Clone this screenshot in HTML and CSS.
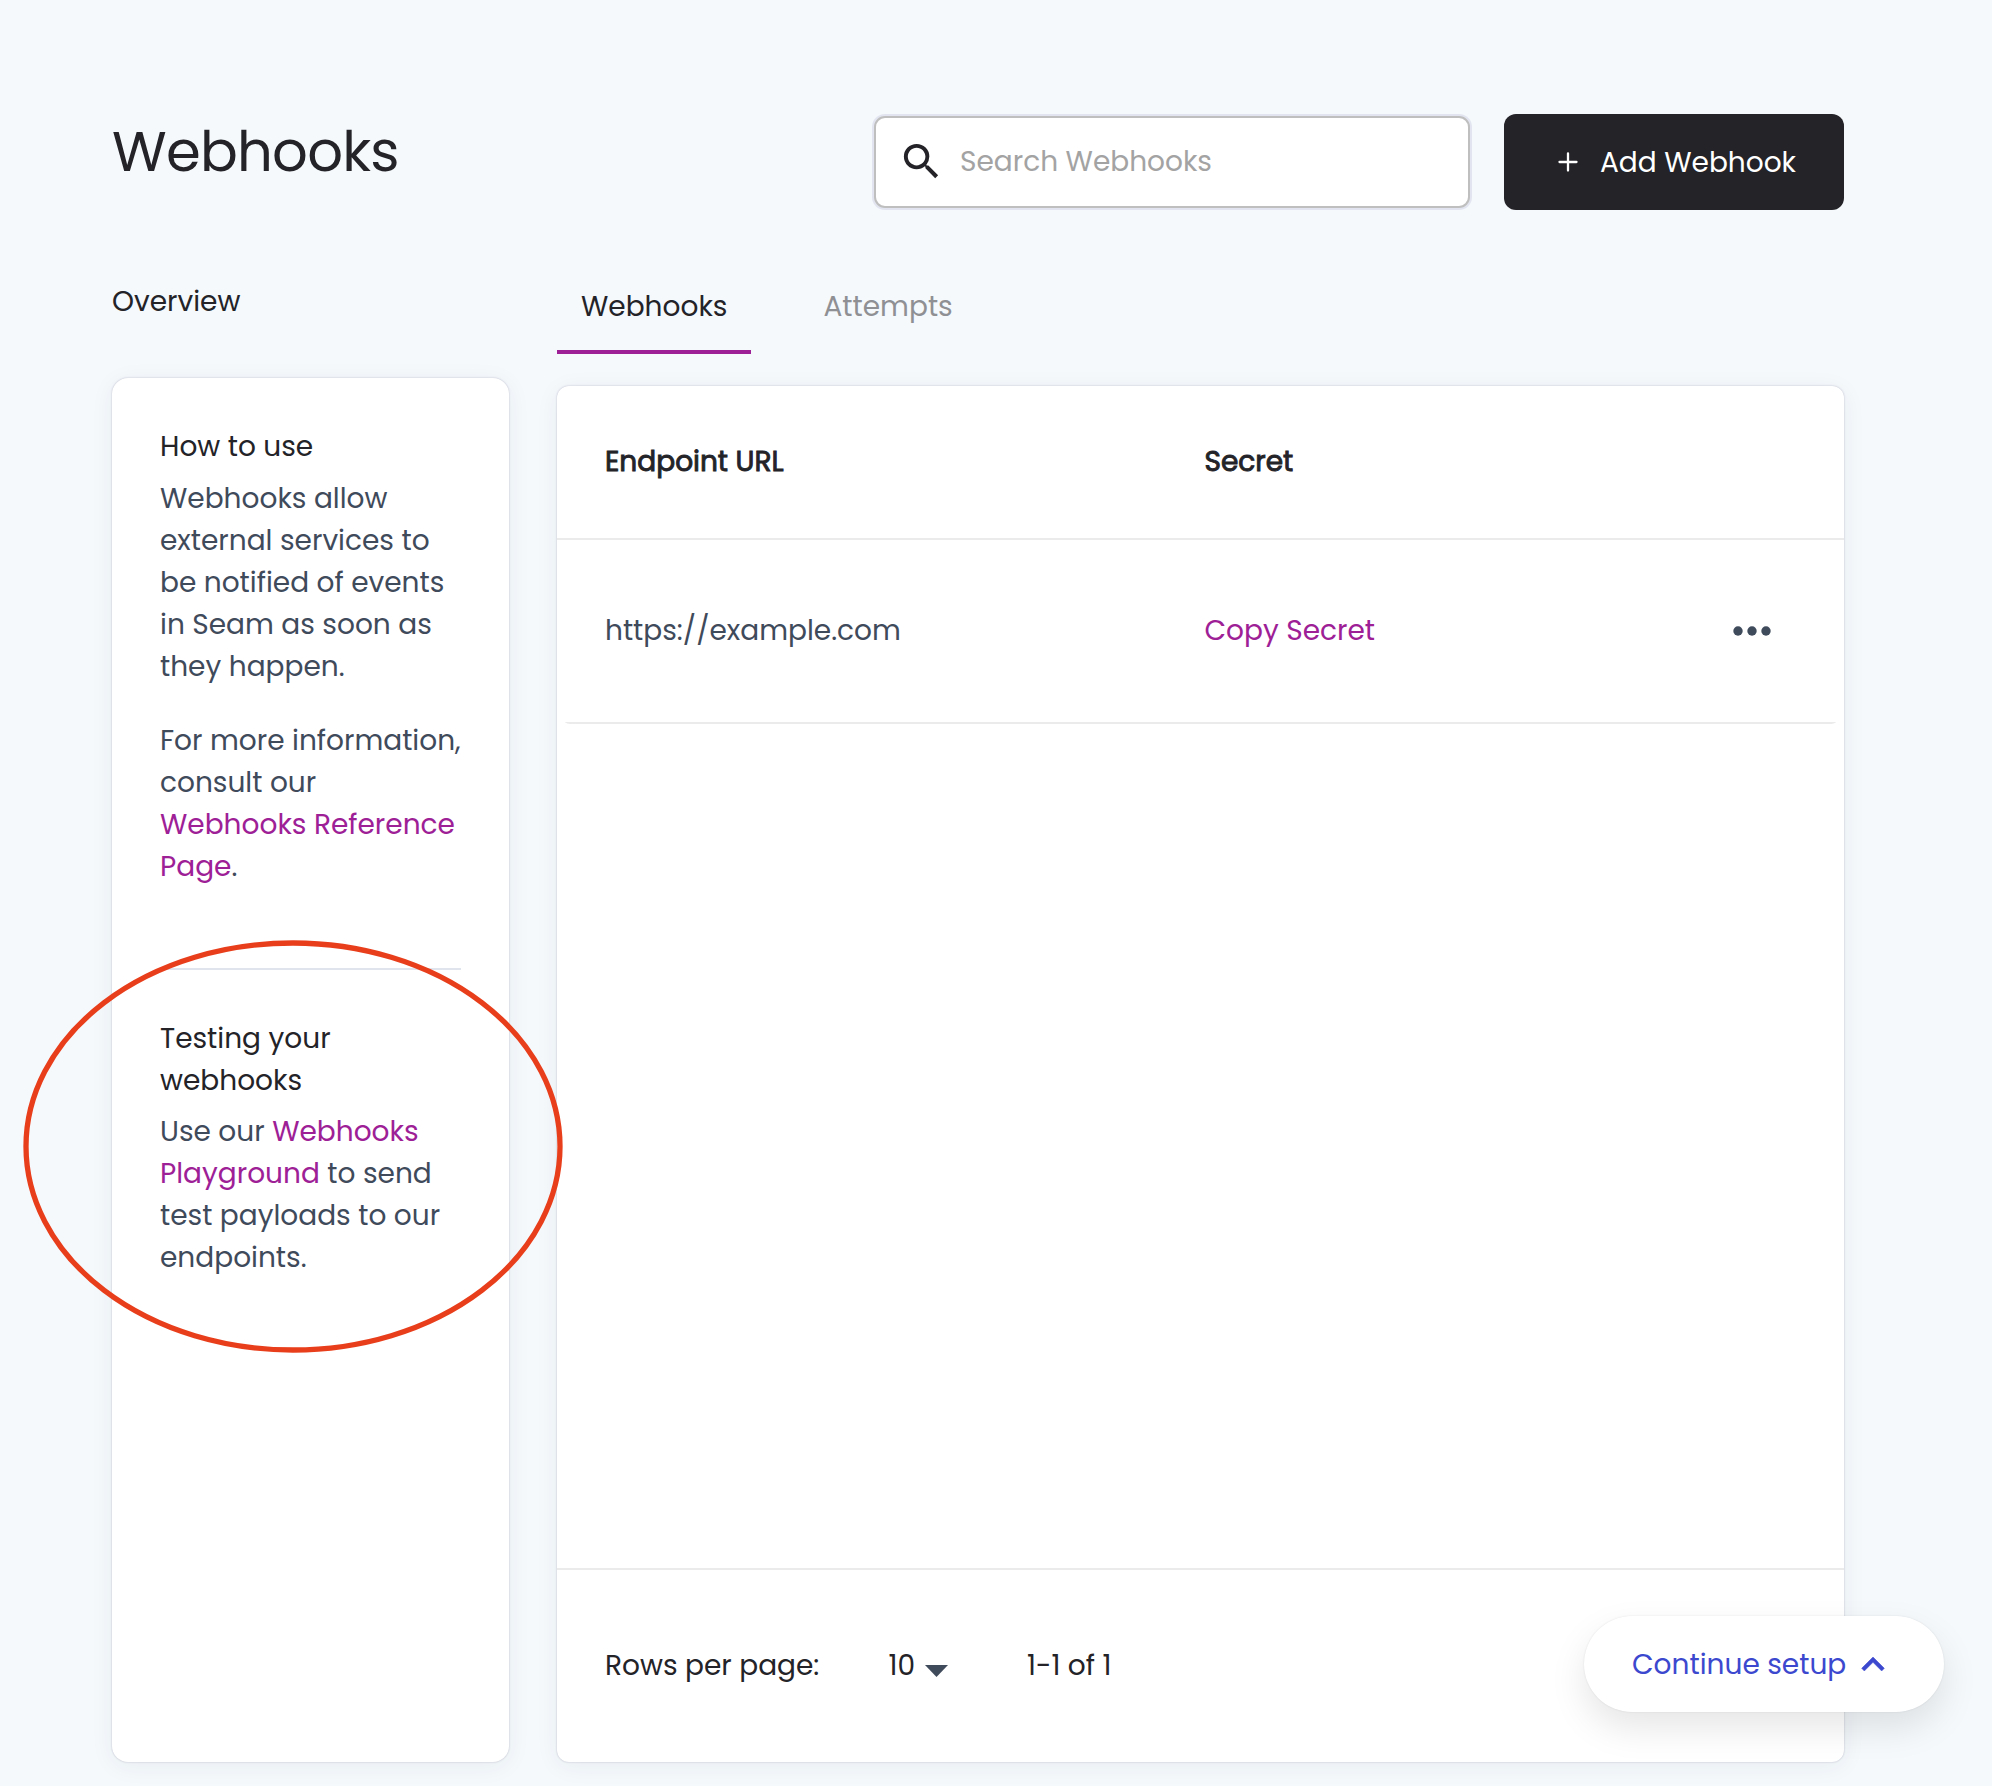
FILE: index.html
```
<!DOCTYPE html>
<html lang="en">
<head>
<meta charset="utf-8">
<title>Webhooks</title>
<link rel="stylesheet" href="styles.css">
</head>
<body>
<main class="page">
  <header class="page-header">
    <h1 class="title">Webhooks</h1>
    <div class="search">
      <svg class="search-icon" viewBox="0 0 24 24"><path d="M15.5 14h-.79l-.28-.27A6.471 6.471 0 0 0 16 9.5 6.5 6.5 0 1 0 9.5 16c1.61 0 3.09-.59 4.23-1.57l.27.28v.79l5 4.99L20.490 19l-4.990-5zm-6 0C7.010 14 5 11.990 5 9.500S7.010 5 9.500 5 14 7.010 14 9.500 11.990 14 9.500 14z"/></svg>
      <span>Search Webhooks</span>
    </div>
    <button class="add-button" type="button">
      <svg class="plus-icon" viewBox="0 0 20 20"><path d="M10 1.500v17M1.500 10h17"/></svg>
      <span>Add Webhook</span>
    </button>
  </header>

  <div class="columns">
    <aside class="sidebar">
      <h2 class="overview">Overview</h2>
      <div class="info-card">
        <section class="info-section">
          <h3>How to use</h3>
          <p>Webhooks allow external services to be notified of events in Seam as soon as they happen.</p>
          <p>For more information, consult our <a>Webhooks Reference Page</a>.</p>
        </section>
        <section class="info-section">
          <h3>Testing your webhooks</h3>
          <p>Use our <a>Webhooks Playground</a> to send test payloads to our endpoints.</p>
        </section>
      </div>
    </aside>

    <section class="content">
      <nav class="tabs">
        <a class="tab tab-active">Webhooks</a>
        <a class="tab">Attempts</a>
      </nav>
      <div class="table-card">
        <div class="table-head">
          <span>Endpoint URL</span>
          <span>Secret</span>
        </div>
        <div class="table-row">
          <span>https://example.com</span>
          <a>Copy Secret</a>
          <svg class="more-icon" viewBox="0 0 38 10"><circle cx="5" cy="5" r="4.700"/><circle cx="19" cy="5" r="4.700"/><circle cx="33" cy="5" r="4.700"/></svg>
        </div>
        <div class="table-footer">
          <span class="rows-label">Rows per page:</span>
          <span class="rows-count">10</span>
          <svg class="caret" viewBox="0 0 24 12"><path d="M0 0h23L11.500 12z"/></svg>
          <span>1-1 of 1</span>
        </div>
      </div>
    </section>
  </div>
</main>

<button class="setup" type="button">
  <span>Continue setup</span>
  <svg class="chevron" viewBox="6 8 12 7.410"><path d="M12 8l-6 6 1.410 1.410L12 10.830l4.590 4.580L18 14z"/></svg>
</button>

<svg class="highlight" viewBox="0 0 540 413"><ellipse cx="270" cy="206.500" rx="267" ry="203.500"/></svg>
</body>
</html>
```
FILE: styles.css
```
* {
  box-sizing: border-box;
}

body {
  margin: 0;
  background: #f5f9fc;
  color: #232328;
  font-family: Poppins, Inter, sans-serif;
  font-size: 28px;
  line-height: 42px;
}

h1, h2, h3, p {
  margin: 0;
  font-size: inherit;
  font-weight: 400;
}

a {
  color: #9e2096;
}

button {
  border: 0;
  font: inherit;
}

.page {
  display: flex;
  flex-direction: column;
  width: 1992px;
  height: 1786px;
  padding: 114px 148px 24px 112px;
}

.page-header {
  display: flex;
  align-items: center;
  height: 96px;
}

.title {
  flex: 1;
  padding-bottom: 20px;
  font-size: 56px;
  line-height: 72px;
  letter-spacing: -0.75px;
}

.search {
  display: flex;
  align-items: center;
  gap: 15px;
  width: 596px;
  height: 92px;
  margin-right: 34px;
  padding: 0 22px;
  border: 2px solid #bfbfbf;
  border-radius: 11px;
  background: #fff;
  box-shadow: 0 0 0 2px #e2e5ef;
  color: #a3a3a3;
}

.search-icon {
  width: 47px;
  height: 47px;
  margin-top: -1px;
  fill: #232328;
}

.add-button {
  display: flex;
  align-items: center;
  gap: 22px;
  width: 340px;
  height: 96px;
  padding: 1px 0 0 54px;
  border-radius: 12px;
  background: #232328;
  color: #fff;
}

.plus-icon {
  width: 20px;
  height: 20px;
  margin-top: -1px;
  fill: none;
  stroke: #fff;
  stroke-width: 2.300;
  stroke-linecap: round;
}

.columns {
  display: flex;
  flex: 1;
  gap: 48px;
  padding-top: 71px;
}

.sidebar {
  display: flex;
  flex-direction: column;
  width: 397px;
}

.overview {
  padding-bottom: 55px;
}

.info-card,
.table-card {
  flex: 1;
  background: #fff;
  box-shadow: 0 0 2px rgba(40, 30, 80, 0.28), 0 4px 24px rgba(30, 50, 70, 0.06);
}

.info-card {
  padding: 0 48px;
  border-radius: 16px;
}

.info-section {
  padding: 48px 0 80px;
  color: #3f4a5b;
}

.info-section + .info-section {
  border-top: 2px solid #e0e4ec;
}

.info-section h3 {
  padding-bottom: 10px;
  color: #232328;
}

.info-section + .info-section h3 {
  padding-bottom: 9px;
}

.info-section p + p {
  padding-top: 32px;
}

.content {
  display: flex;
  flex: 1;
  flex-direction: column;
}

.tabs {
  display: flex;
  gap: 48.500px;
  padding-bottom: 32px;
}

.tab {
  height: 73px;
  padding: 5px 24px 0;
  color: #8f9094;
}

.tab-active {
  width: 194px;
  border-bottom: 4px solid #9e2096;
  color: #232328;
}

.table-card {
  display: flex;
  flex-direction: column;
  border-radius: 12px;
}

.table-head,
.table-row {
  display: grid;
  grid-template-columns: 599.500px 1fr auto;
  align-items: center;
}

.table-head {
  height: 154px;
  padding: 0 48px;
  border-bottom: 2px solid #ebebeb;
  -webkit-text-stroke: 0.9px #232328;
}

.table-row {
  height: 184px;
  margin: 0 8px;
  padding: 0 65px 0 40px;
  border-bottom: 2px solid #ebebeb;
  border-radius: 0 0 8px 8px / 0 0 2px 2px;
  color: #3f4a5b;
}

.more-icon {
  width: 38px;
  height: 10px;
  fill: #3f4a5b;
}

.table-footer {
  display: flex;
  align-items: center;
  height: 194px;
  margin-top: auto;
  padding: 0 48px;
  border-top: 2px solid #ebebeb;
}

.rows-label {
  width: 283.500px;
}

.rows-count {
  width: 36px;
}

.caret {
  width: 24px;
  height: 12px;
  margin: 10px 78.500px 0 0;
  fill: #3f4a5b;
}

.setup {
  position: absolute;
  top: 1616px;
  left: 1584px;
  display: flex;
  align-items: center;
  gap: 15px;
  width: 360px;
  height: 96px;
  padding: 1px 0 0 48px;
  border-radius: 48px;
  background: #fff;
  box-shadow: 0 0 2px rgba(0, 0, 0, 0.1), 0 16px 36px rgba(0, 0, 0, 0.1);
  color: #3c49cf;
}

.chevron {
  width: 24px;
  height: 14px;
  margin-top: -2px;
  fill: #3c49cf;
  stroke: #3c49cf;
  stroke-width: 0.250;
}

/* Callout ring around the testing section */
.highlight {
  position: absolute;
  top: 940.300px;
  left: 23.400px;
  width: 540px;
  height: 413px;
  fill: none;
  stroke: #e83e1b;
  stroke-width: 5.300;
}
```
